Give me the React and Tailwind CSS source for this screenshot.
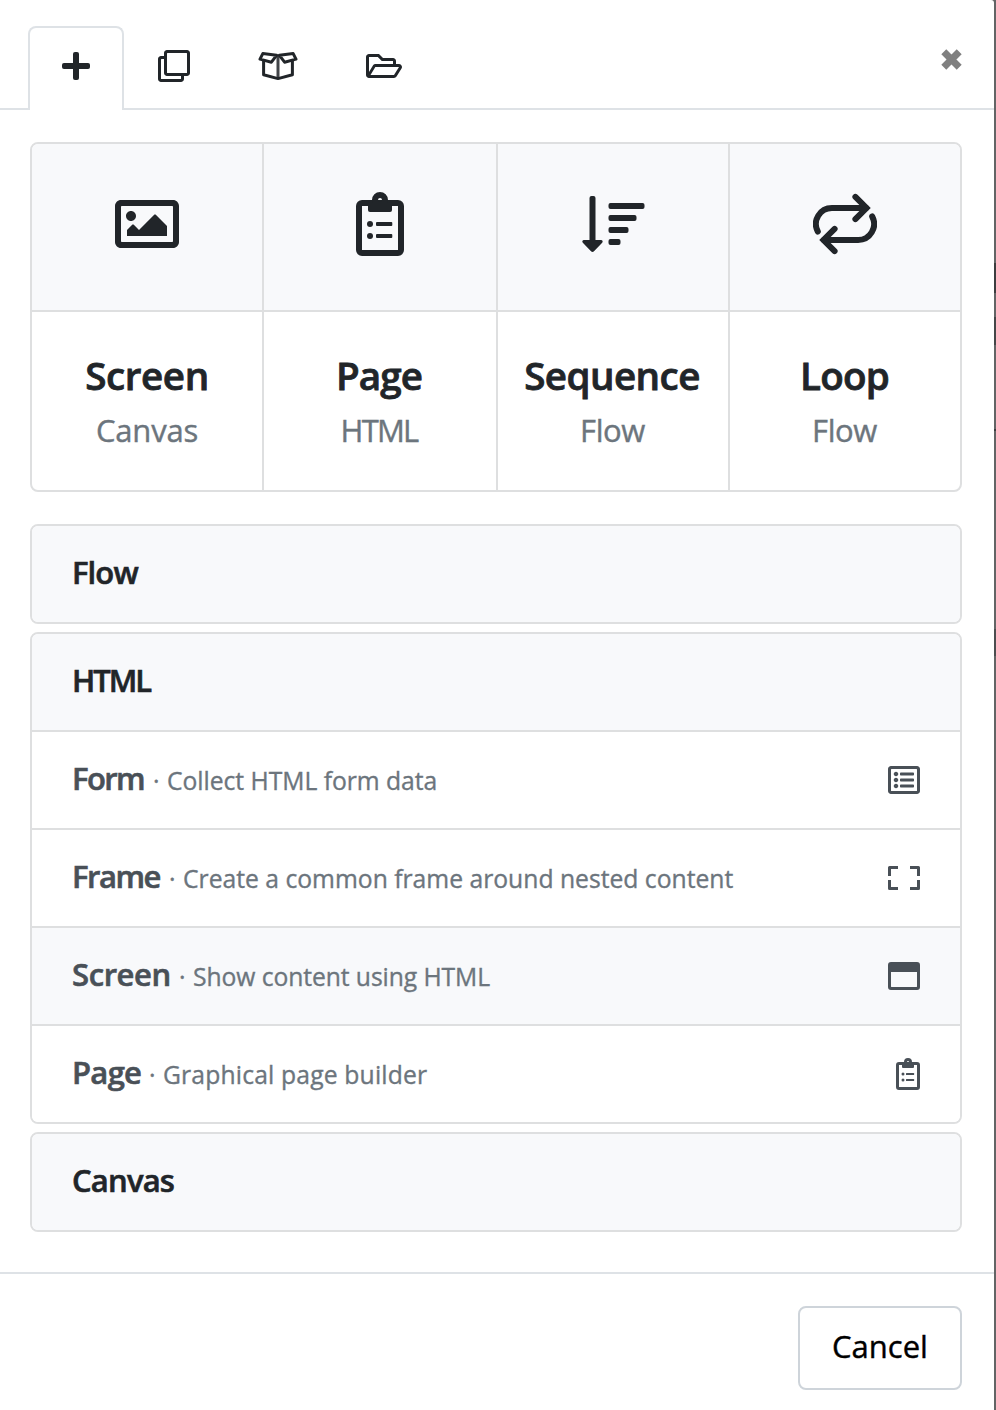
import { FaRegImage, FaRegClone, FaRegFolderOpen, FaRegListAlt } from "react-icons/fa";

function PlusIcon() {
  return (
    <svg width="28" height="28" viewBox="0 0 28 28" fill="currentColor">
      <rect x="0" y="11" width="28" height="6" rx="2" />
      <rect x="11" y="0" width="6" height="28" rx="2" />
    </svg>
  );
}

function BoxOpenIcon() {
  return (
    <svg width="40" height="32" viewBox="0 0 40 32" fill="none" stroke="currentColor" strokeWidth="3" strokeLinejoin="round">
      <path d="M4.8 3.6 2 9.1 13.4 12.2 18.6 5.3ZM35.2 3.6 38 9.1 26.6 12.2 21.4 5.3Z" />
      <path d="M5.6 10.5V24.8L20 28.6 34.4 24.8V10.5" />
      <path d="M20 5V28" strokeOpacity="0.85" />
    </svg>
  );
}

function CloseIcon() {
  return (
    <svg width="21" height="21" viewBox="0 0 21 21" stroke="#808080" strokeWidth="7">
      <path d="M2.8 2.8 18.2 18.2M18.2 2.8 2.8 18.2" />
    </svg>
  );
}

function ClipboardIcon({ className }) {
  return (
    <svg className={className} viewBox="0 0 48 64" fill="currentColor">
      <rect x="3" y="11" width="42" height="50" rx="3" fill="none" stroke="currentColor" strokeWidth="6" />
      <circle cx="24" cy="8" r="5" fill="none" stroke="currentColor" strokeWidth="6" />
      <path d="M12 11H36V18a2 2 0 0 1-2 2H14a2 2 0 0 1-2-2Z" />
      <circle cx="14" cy="32" r="3" />
      <circle cx="14" cy="44" r="3" />
      <rect x="20" y="30" width="16.3" height="4" rx="1" />
      <rect x="20" y="42" width="16.3" height="4" rx="1" />
    </svg>
  );
}

function SequenceIcon() {
  return (
    <svg width="64" height="64" viewBox="0 0 64 64" fill="currentColor">
      <path d="M8.5 6a2 2 0 0 1 2-2h2a2 2 0 0 1 2 2V48H20c1.6 0 2.2 1.6 1.2 2.7L13 59.2c-.9.9-2.1.9-3 0L1.8 50.7C.8 49.6 1.4 48 3 48H8.5Z" />
      <rect x="27.5" y="11" width="36" height="6" rx="2" />
      <rect x="27.5" y="23" width="28" height="6" rx="2" />
      <rect x="27.5" y="35" width="20" height="6" rx="2" />
      <rect x="27.5" y="47" width="12" height="6" rx="2" />
    </svg>
  );
}

function LoopIcon() {
  return (
    <svg width="64" height="64" viewBox="0 0 64 64" fill="none" stroke="currentColor" strokeWidth="6">
      <path d="M4.8 39.5A16 16 0 0 1 19 16H53" strokeLinecap="round" />
      <path d="M42.4 4.9 53.5 16 42.4 27.1" strokeLinecap="round" />
      <path d="M59.2 24.5A16 16 0 0 1 45 48H11" strokeLinecap="round" />
      <path d="M21.6 59.1 10.5 48 21.6 36.9" strokeLinecap="round" />
    </svg>
  );
}

function FrameIcon() {
  return (
    <svg width="32" height="24" viewBox="0 0 32 24" fill="none" stroke="currentColor" strokeWidth="3" strokeLinejoin="round">
      <path d="M10 1.5H1.5V10M22 1.5H30.5V10M10 22.5H1.5V14M22 22.5H30.5V14" />
    </svg>
  );
}

function WindowIcon() {
  return (
    <svg width="32" height="28" viewBox="0 0 32 28">
      <path fill="currentColor" fillRule="evenodd" d="M3 0H29a3 3 0 0 1 3 3V25a3 3 0 0 1-3 3H3a3 3 0 0 1-3-3V3A3 3 0 0 1 3 0ZM3 10V24.6a.4.4 0 0 0 .4.4H28.6a.4.4 0 0 0 .4-.4V10Z" />
    </svg>
  );
}

const tiles = [
  { title: "Screen", kind: "Canvas", icon: <FaRegImage size={64} />, titleCls: "tracking-[-0.4px]", kindCls: "tracking-[-0.2px]" },
  { title: "Page", kind: "HTML", icon: <ClipboardIcon className="h-16 w-12" />, titleCls: "tracking-[-0.9px] pr-[2px]", kindCls: "tracking-[-1.8px] pr-[2px]" },
  { title: "Sequence", kind: "Flow", icon: <SequenceIcon />, titleCls: "tracking-[-0.55px] pr-[2px]", kindCls: "tracking-[-0.4px] pr-px" },
  { title: "Loop", kind: "Flow", icon: <LoopIcon />, titleCls: "tracking-[-0.8px] pr-px", kindCls: "tracking-[-0.4px] pr-px" },
];

const rows = [
  { name: "Form", text: "Collect HTML form data", icon: <FaRegListAlt size={32} />, nameCls: "w-[73px] tracking-[-1.6px]", textCls: "tracking-[-0.03px]" },
  { name: "Frame", text: "Create a common frame around nested content", icon: <FrameIcon />, nameCls: "w-[89px] tracking-[-1.5px]", textCls: "tracking-[0px]" },
  { name: "Screen", text: "Show content using HTML", icon: <WindowIcon />, nameCls: "w-[99px] tracking-[-0.4px]", textCls: "tracking-[-0.08px]", active: true },
  { name: "Page", text: "Graphical page builder", icon: <ClipboardIcon className="h-8 w-6" />, nameCls: "w-[69px] tracking-[-0.7px]", textCls: "tracking-[0.16px]" },
];

function Group({ title, titleCls, children }) {
  return (
    <section className="overflow-hidden rounded-lg border-2 border-[#dedfe0]">
      <h2 className={`flex h-24 items-center bg-[#f8f9fb] pb-1 pl-10 text-[31px] font-semibold text-[#212529] [-webkit-text-stroke:0.6px] ${titleCls}`}>{title}</h2>
      {children}
    </section>
  );
}

export default function App() {
  return (
    <div className="flex h-[1410px] w-[996px] overflow-hidden bg-[#636465] font-['Open_Sans','Noto_Sans',sans-serif] text-[#212529]">
      <main className="flex w-[994px] shrink-0 flex-col rounded-tr-[3px] bg-white">
        <header className="flex h-[110px] items-end">
          <div className="h-full w-[28px] border-b-2 border-[#dee2e6]" />
          <div className="flex h-[84px] w-24 items-center justify-center rounded-t-lg border-2 border-b-0 border-[#dee2e6] pb-[6px]">
            <PlusIcon />
          </div>
          <nav className="flex h-full flex-1 border-b-2 border-[#dee2e6] pt-[50px] pl-[34px]">
            <FaRegClone size={32} />
            <span className="ml-[68px]"><BoxOpenIcon /></span>
            <FaRegFolderOpen className="ml-[68px] h-8 w-9" />
            <button className="mr-[32px] ml-auto -mt-px h-[21px]" aria-label="Close"><CloseIcon /></button>
          </nav>
        </header>

        <div className="flex h-[1162px] flex-col px-[30px] pt-8 pr-8">
          <div className="grid h-[350px] grid-cols-[232px_234px_232px_230px] overflow-hidden rounded-lg border-2 border-[#dedfe0]">
            {tiles.map((t, i) => (
              <div key={t.title} className={i < 3 ? "border-r-2 border-[#dedfe0]" : ""}>
                <div className="flex h-[168px] items-center justify-center border-b-2 border-[#dedfe0] bg-[#f8f9fb] pb-[6px]">{t.icon}</div>
                <div className="flex flex-col items-center pt-[43px] whitespace-nowrap">
                  <div className={`text-[38.6px] leading-10 font-semibold [-webkit-text-stroke:0.8px] ${t.titleCls}`}>{t.title}</div>
                  <div className={`mt-[15px] text-[31px] leading-10 text-[#6c757d] [-webkit-text-stroke:0.4px] ${t.kindCls}`}>{t.kind}</div>
                </div>
              </div>
            ))}
          </div>

          <div className="mt-8 flex flex-col gap-2">
            <Group title="Flow" titleCls="tracking-[-0.9px]" />
            <Group title="HTML" titleCls="tracking-[-2px]">
              {rows.map((r) => (
                <div key={r.name} className={`flex h-[98px] items-center justify-between border-t-2 border-[#dedfe0] pr-10 pl-10 text-[#495057] ${r.active ? "bg-[#f8f9fb]" : "bg-white"}`}>
                  <div className="flex items-baseline pb-1 whitespace-nowrap">
                    <span className={`text-[31px] font-semibold [-webkit-text-stroke:0.6px] ${r.nameCls}`}>{r.name}</span>
                    <span className="w-[22px] pl-2 text-[24.7px] text-[#6c757d] [-webkit-text-stroke:0.4px]">·</span>
                    <span className={`text-[24.7px] text-[#6c757d] [-webkit-text-stroke:0.35px] ${r.textCls}`}>{r.text}</span>
                  </div>
                  {r.icon}
                </div>
              ))}
            </Group>
            <Group title="Canvas" titleCls="tracking-[-0.8px]" />
          </div>
        </div>

        <footer className="flex h-[138px] justify-end border-t-2 border-[#dee2e6] pt-8 pr-8">
          <button className="flex h-[84px] w-[164px] items-center justify-center rounded-lg border-2 border-[#ced4da] pb-1 text-[31px] text-black [-webkit-text-stroke:0.4px]">Cancel</button>
        </footer>
      </main>
      <div className="flex w-[2px] flex-col">
        <div className="mt-[263px] h-[30px] bg-[#3c3d3f]" />
        <div className="mt-[24px] h-[28px] bg-[#454648]" />
        <div className="mt-[84px] h-[2px] bg-[#3c3d3f]" />
        <div className="mt-[198px] h-[27px] bg-[#4c4d4f]" />
      </div>
    </div>
  );
}
